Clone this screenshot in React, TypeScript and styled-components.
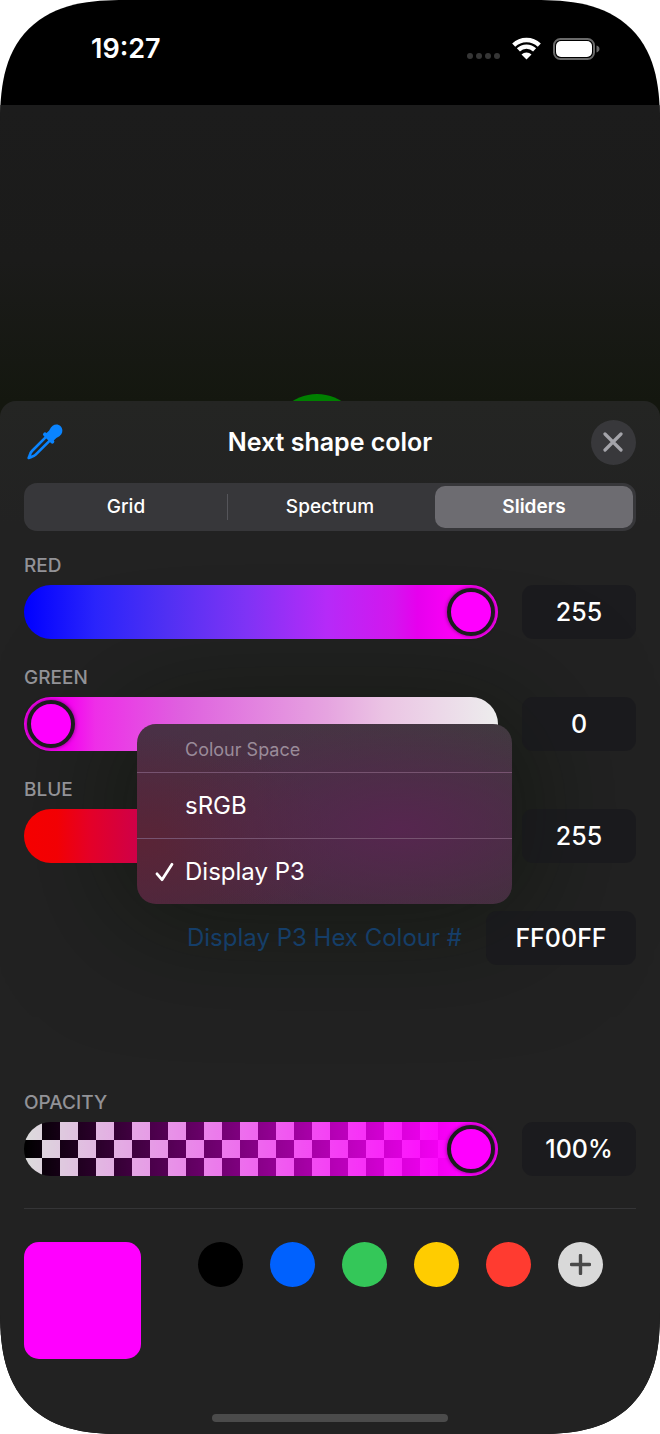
import React, { useState } from "react";
import styled, { createGlobalStyle, css } from "styled-components";

const GlobalStyle = createGlobalStyle`
  *, *::before, *::after { box-sizing: border-box; }
  body {
    margin: 0;
    background: #ffffff;
    font-family: Inter, "Liberation Sans", sans-serif;
    color: #ffffff;
  }
  button, input { font: inherit; color: inherit; }
  button { border: 0; padding: 0; background: none; cursor: pointer; }
`;

const Screen = styled.main`
  display: flex;
  flex-direction: column;
  min-height: 100vh;
  border-radius: 102px;
  overflow: hidden;
  background: #000000;
  @supports (corner-shape: superellipse(1.4)) {
    border-radius: 125px;
    corner-shape: superellipse(1.4);
  }
`;

const StatusBar = styled.header`
  display: flex;
  align-items: center;
  justify-content: space-between;
  height: 105px;
  padding: 0 60px 8px 91px;
`;

const Clock = styled.time`
  font-size: 27px;
  line-height: 32px;
  font-weight: 600;
`;

const StatusIcons = styled.div`
  display: flex;
  align-items: center;
  gap: 11px;
`;

const Canvas = styled.section`
  position: relative;
  height: 312px;
  margin-bottom: -16px;
  overflow: hidden;
  background: linear-gradient(#1c1c1c 0%, #1b1b1a 50%, #14170f 95%);
`;

const Shape = styled.span`
  position: absolute;
  top: 289px;
  left: 48%;
  width: 92px;
  height: 92px;
  margin-left: -46px;
  border-radius: 50%;
  background: #008000;
`;

const Sheet = styled.section`
  position: relative;
  isolation: isolate;
  flex: 1;
  display: flex;
  flex-direction: column;
  padding: 18px 24px 12px;
  border-radius: 16px 16px 0 0;
  background: linear-gradient(#242523 0%, #222222 12%, #222222 100%);
`;

const SheetHeader = styled.div`
  display: grid;
  grid-template-columns: 45px 1fr 45px;
  align-items: center;
  height: 46px;
`;

const Title = styled.h1`
  margin: 0;
  font-size: 25px;
  line-height: 32px;
  font-weight: 600;
  text-align: center;
`;

const IconButton = styled.button`
  display: flex;
  align-items: center;
  padding-left: 2px;
  height: 45px;
`;

const CloseButton = styled.button`
  display: grid;
  place-items: center;
  width: 45px;
  height: 45px;
  border-radius: 50%;
  background: #38383b;
`;

const Segments = styled.div`
  display: grid;
  grid-template-columns: repeat(3, 1fr);
  height: 48px;
  margin-top: 18px;
  border-radius: 13px;
  background: #37373a;
`;

const Segment = styled.button<{ $active: boolean; $divided: boolean }>`
  position: relative;
  font-size: 19px;
  line-height: 24px;
  font-weight: 500;
  ${(p) =>
    p.$active &&
    css`
      margin: 3px;
      border-radius: 10px;
      background: #6d6c71;
      font-weight: 600;
    `}
  ${(p) =>
    p.$divided &&
    css`
      &::before {
        content: "";
        position: absolute;
        left: -1px;
        top: 11px;
        bottom: 11px;
        width: 1px;
        background: #55555a;
      }
    `}
`;

const Channels = styled.div`
  display: flex;
  flex-direction: column;
  gap: 27px;
  margin-top: 23px;
`;

const Channel = styled.div`
  display: flex;
  flex-direction: column;
  gap: 7px;
`;

const ChannelLabel = styled.label`
  font-size: 19px;
  line-height: 24px;
  font-weight: 500;
  color: #929297;
`;

const ChannelRow = styled.div`
  display: flex;
  gap: 24px;
`;

const thumb = css`
  width: 48px;
  height: 48px;
  border: 4px solid #1c1c1e;
  border-radius: 50%;
  background: #ff00ff;
  box-shadow: 0 0 4px rgba(0, 0, 0, 0.5);
`;

const Range = styled.input<{ $track: string }>`
  appearance: none;
  flex: 1;
  min-width: 0;
  height: 54px;
  margin: 0;
  padding: 0 3px;
  border-radius: 27px;
  background: ${(p) => p.$track};
  &::-webkit-slider-thumb {
    appearance: none;
    ${thumb}
  }
  &::-moz-range-thumb {
    box-sizing: border-box;
    ${thumb}
  }
`;

const ValueField = styled.input<{ $wide?: boolean }>`
  width: ${(p) => (p.$wide ? 150 : 114)}px;
  height: 54px;
  padding: 0;
  border: 0;
  border-radius: 11px;
  background: rgba(24, 24, 28, 0.7);
  font-size: 25px;
  line-height: 32px;
  font-weight: 500;
  text-align: center;
`;

const HexRow = styled.div`
  position: relative;
  display: flex;
  align-items: center;
  justify-content: flex-end;
  gap: 24px;
  margin-top: 48px;
`;

const HexButton = styled.button`
  font-size: 24px;
  line-height: 32px;
  color: #153e69;
`;

const menuBox = css`
  position: absolute;
  right: 124px;
  bottom: calc(100% + 7px);
  width: 375px;
  border-radius: 19px;
`;

const Menu = styled.div`
  ${menuBox}
  overflow: hidden;
  background:
    radial-gradient(ellipse 240px 110px at 70% 58%, #56264f 0%, rgba(86, 38, 79, 0) 100%),
    radial-gradient(ellipse 200px 110px at 0% 66%, #5a2436 0%, rgba(90, 36, 54, 0) 100%),
    linear-gradient(to right, rgba(78, 42, 70, 0.6), rgba(64, 56, 60, 0.6)),
    linear-gradient(#443a46 0%, #432d40 60%, #40273a 100%);
`;

/* Sits behind the sliders so that only the sheet itself is darkened. */
const MenuShadow = styled.div`
  ${menuBox}
  z-index: -1;
  height: 180px;
  box-shadow: 0 0 120px 16px rgba(8, 16, 4, 0.5);
`;

const MenuTitle = styled.div`
  padding: 14px 48px 10px;
  font-size: 18px;
  line-height: 24px;
  color: #9a8b99;
`;

const MenuItem = styled.button`
  display: flex;
  align-items: center;
  width: 100%;
  height: 66px;
  border-top: 1px solid #765370;
  font-size: 24px;
  line-height: 32px;
  text-align: left;
`;

const CheckSlot = styled.span`
  display: flex;
  width: 48px;
  padding-left: 18px;
`;

const OpacityBlock = styled.div`
  margin-top: 126px;
`;

const Divider = styled.hr`
  width: 100%;
  margin: 32px 0 33px;
  border: 0;
  border-top: 1px solid #353537;
`;

const Palette = styled.div`
  display: flex;
  align-items: flex-start;
  gap: 57px;
`;

const CurrentColor = styled.div`
  width: 117px;
  height: 117px;
  border-radius: 15px;
  background: #ff00ff;
`;

const Dots = styled.div`
  display: flex;
  flex-wrap: wrap;
  flex: 1;
  gap: 27px;
`;

const Dot = styled.button<{ $color: string }>`
  display: grid;
  place-items: center;
  width: 45px;
  height: 45px;
  border-radius: 50%;
  background: ${(p) => p.$color};
`;

const HomeIndicator = styled.div`
  width: 236px;
  height: 8px;
  margin: auto auto 0;
  border-radius: 4px;
  background: #4b4b4b;
`;

const CellularIcon = () => (
  <svg width="34" height="22" viewBox="0 0 34 22" fill="#363636" aria-hidden="true">
    <circle cx="3" cy="18" r="3" />
    <circle cx="12" cy="18" r="3" />
    <circle cx="21" cy="18" r="3" />
    <circle cx="30" cy="18" r="3" />
  </svg>
);

const WifiIcon = () => (
  <svg width="30" height="26" viewBox="0 0 30 26" aria-hidden="true">
    <g fill="none" stroke="#ffffff" strokeWidth="4.400">
      <path d="M1.700 9.200a18.400 18.400 0 0 1 25.600 0" />
      <path d="M6.400 13.900a11.700 11.700 0 0 1 16.200 0" />
    </g>
    <path fill="#ffffff" d="M14.500 23.400l-5-5a7.200 7.200 0 0 1 10 0z" />
  </svg>
);

const BatteryIcon = () => (
  <svg width="47" height="22" viewBox="0 0 47 22" aria-hidden="true">
    <rect x="1" y="1" width="40" height="20" rx="6.500" fill="none" stroke="#6a6a6a" strokeWidth="2" />
    <rect x="3" y="3" width="36" height="16" rx="5" fill="#ffffff" />
    <path d="M43.500 7.500c1.800.6 3 1.900 3 3.500s-1.200 2.900-3 3.500z" fill="#6a6a6a" />
  </svg>
);

const EyedropperIcon = () => (
  <svg width="38" height="38" viewBox="80 130 114 114" aria-hidden="true">
    <g fill="none" stroke="#0a84ff" strokeLinecap="round" strokeLinejoin="round">
      <path strokeWidth="8" d="M141 171L98 214q-5 5-6 11l-4 10 10-4q6-1 11-6l43-43" />
      <path strokeWidth="12" d="M137 164l22 22" />
    </g>
    <path
      fill="#0a84ff"
      d="M139 162l10-9q6-12 11-15c8-5 18-4 24 2s7 16 2 24q-4 6-15 11l-10 10z"
    />
  </svg>
);

const CloseIcon = () => (
  <svg width="21" height="21" viewBox="0 0 21 21" aria-hidden="true">
    <path d="M2 2l16 16M18 2L2 18" stroke="#a4a4aa" strokeWidth="3.200" strokeLinecap="round" />
  </svg>
);

const PlusIcon = () => (
  <svg width="21" height="21" viewBox="0 0 21 21" aria-hidden="true">
    <path d="M10.500 1.500v18M1.500 10.500h18" stroke="#4a4a4a" strokeWidth="3.400" strokeLinecap="round" />
  </svg>
);

const CheckIcon = () => (
  <svg width="20" height="20" viewBox="0 0 20 20" aria-hidden="true">
    <path
      d="M2 11.800L7 17.700L17 2.300"
      fill="none"
      stroke="#ffffff"
      strokeWidth="2.800"
      strokeLinecap="round"
      strokeLinejoin="round"
    />
  </svg>
);

const tracks = {
  red: "linear-gradient(to right, #0000ff 0%, #2a24fb 15%, #5030f3 30%, #7f33f5 47%, #b62af8 64%, #d316ee 78%, #e600ee 83%, #ff00f8 92%)",
  green:
    "linear-gradient(to right, #f700f2 0%, #f500f0 9%, #ee2ee8 15%, #df60df 33%, #e6a4e0 64%, #ebc4e4 76%, #ededed 100%)",
  blue: "linear-gradient(to right, #f50000 0%, #f20004 7%, #e40028 14%, #cf0048 24%, #d000ff 100%)",
  opacity:
    "linear-gradient(to right, rgba(255, 0, 255, 0) 0%, #ff00ff 92%), conic-gradient(#000000 25%, #dcdcdc 0 50%, #000000 0 75%, #dcdcdc 0) 0 0 / 36px 36px",
};

type SliderProps = {
  id: string;
  label: string;
  track: string;
  max: number;
  initial: number;
  unit?: string;
};

const ChannelSlider = ({ id, label, track, max, initial, unit = "" }: SliderProps) => {
  const [value, setValue] = useState(initial);
  return (
    <Channel>
      <ChannelLabel htmlFor={id}>{label}</ChannelLabel>
      <ChannelRow>
        <Range
          id={id}
          type="range"
          min={0}
          max={max}
          value={value}
          $track={track}
          onChange={(e) => setValue(Number(e.target.value))}
        />
        <ValueField
          type="text"
          inputMode="numeric"
          aria-label={`${label} value`}
          value={`${value}${unit}`}
          onChange={(e) => setValue(Math.min(max, parseInt(e.target.value, 10) || 0))}
        />
      </ChannelRow>
    </Channel>
  );
};

const modes = ["Grid", "Spectrum", "Sliders"];
const spaces = ["sRGB", "Display P3"];
const swatches = [
  { name: "Black", color: "#000000" },
  { name: "Blue", color: "#0061fe" },
  { name: "Green", color: "#34c759" },
  { name: "Yellow", color: "#ffcc00" },
  { name: "Red", color: "#ff3b30" },
];

export default function App() {
  const [mode, setMode] = useState("Sliders");
  const [space, setSpace] = useState("Display P3");
  const [hex, setHex] = useState("FF00FF");
  const active = modes.indexOf(mode);

  return (
    <>
      <GlobalStyle />
      <Screen>
        <StatusBar>
          <Clock>19:27</Clock>
          <StatusIcons>
            <CellularIcon />
            <WifiIcon />
            <BatteryIcon />
          </StatusIcons>
        </StatusBar>
        <Canvas>
          <Shape />
        </Canvas>
        <Sheet>
          <SheetHeader>
            <IconButton aria-label="Pick colour from screen">
              <EyedropperIcon />
            </IconButton>
            <Title>Next shape color</Title>
            <CloseButton aria-label="Close">
              <CloseIcon />
            </CloseButton>
          </SheetHeader>
          <Segments role="tablist">
            {modes.map((name, i) => (
              <Segment
                key={name}
                role="tab"
                aria-selected={i === active}
                $active={i === active}
                $divided={i > 0 && i !== active && i - 1 !== active}
                onClick={() => setMode(name)}
              >
                {name}
              </Segment>
            ))}
          </Segments>
          <Channels>
            <ChannelSlider id="red" label="RED" track={tracks.red} max={255} initial={255} />
            <ChannelSlider id="green" label="GREEN" track={tracks.green} max={255} initial={0} />
            <ChannelSlider id="blue" label="BLUE" track={tracks.blue} max={255} initial={255} />
          </Channels>
          <HexRow>
            <MenuShadow />
            <HexButton aria-haspopup="menu" aria-expanded="true">
              {space} Hex Colour #
            </HexButton>
            <ValueField
              $wide
              type="text"
              aria-label="Hex colour"
              value={hex}
              onChange={(e) => setHex(e.target.value.toUpperCase())}
            />
            <Menu role="menu">
              <MenuTitle>Colour Space</MenuTitle>
              {spaces.map((name) => (
                <MenuItem
                  key={name}
                  role="menuitemradio"
                  aria-checked={name === space}
                  onClick={() => setSpace(name)}
                >
                  <CheckSlot>{name === space && <CheckIcon />}</CheckSlot>
                  {name}
                </MenuItem>
              ))}
            </Menu>
          </HexRow>
          <OpacityBlock>
            <ChannelSlider
              id="opacity"
              label="OPACITY"
              track={tracks.opacity}
              max={100}
              initial={100}
              unit="%"
            />
          </OpacityBlock>
          <Divider />
          <Palette>
            <CurrentColor />
            <Dots>
              {swatches.map((s) => (
                <Dot key={s.name} aria-label={s.name} $color={s.color} />
              ))}
              <Dot aria-label="Add colour" $color="#d9d9d9">
                <PlusIcon />
              </Dot>
            </Dots>
          </Palette>
          <HomeIndicator />
        </Sheet>
      </Screen>
    </>
  );
}
